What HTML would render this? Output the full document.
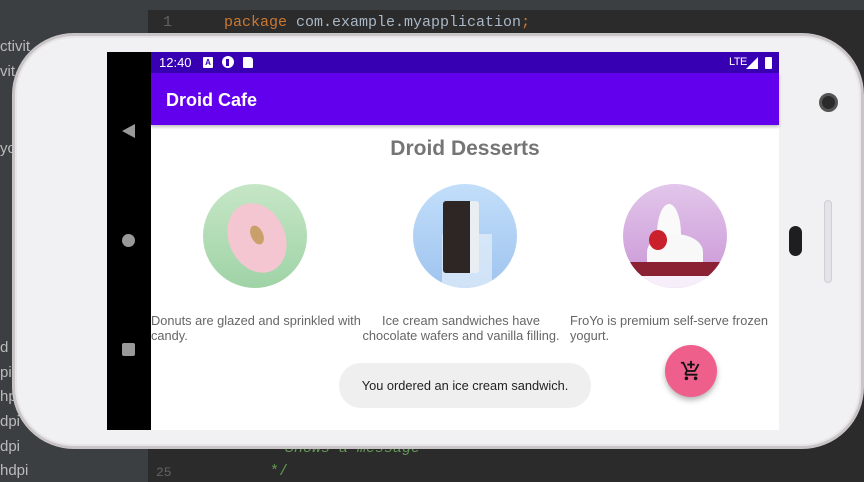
<!DOCTYPE html>
<html><head><meta charset="utf-8"><style>
*{margin:0;padding:0;box-sizing:border-box}
body{width:864px;height:482px;overflow:hidden;background:#2b2b2b;position:relative;font-family:"Liberation Sans",sans-serif}
.abs{position:absolute}
.code{font-family:"Liberation Mono",monospace;font-size:15px}
.side{color:#bbb;font-size:15px}
.desc{color:#666;font-size:12.8px;line-height:15px;white-space:nowrap}
</style></head><body>
<div class="abs" style="left:0;top:0;width:864px;height:10px;background:#3c3f41"></div>
<div class="abs" style="left:0;top:0;width:148px;height:482px;background:#3c3f41"></div>
<div class="abs code" style="left:163px;top:14px;color:#606366">1</div>
<div class="abs code" style="left:224px;top:14px;color:#a9b7c6"><span style="color:#cc7832">package</span> com.example.myapplication<span style="color:#cc7832">;</span></div>
<div class="abs side" style="left:0;top:38px">ctivit</div>
<div class="abs side" style="left:0;top:63px">vit</div>
<div class="abs side" style="left:0;top:140px">yc</div>
<div class="abs side" style="left:0;top:339px">d</div>
<div class="abs side" style="left:0;top:364px">pi</div>
<div class="abs side" style="left:0;top:388px">hpi</div>
<div class="abs side" style="left:0;top:413px">dpi</div>
<div class="abs side" style="left:0;top:438px">dpi</div>
<div class="abs side" style="left:0;top:462px">hdpi</div>
<div class="abs code" style="left:156px;top:465px;color:#606366;font-size:13px">25</div>
<div class="abs code" style="left:270px;top:463px;color:#629755">*/</div>
<div class="abs code" style="left:285px;top:440px;color:#629755;font-style:italic">Shows a message</div>
<!-- phone -->
<div class="abs" style="left:12px;top:33px;width:852px;height:416px;background:#f1f1f3;border-radius:62px;border:3px solid #c9c5c7;box-shadow:inset 0 0 0 2px #e8e6e8"></div>
<div class="abs" style="left:819px;top:93px;width:19px;height:19px;border-radius:50%;background:#2a2a2a;border:3px solid #555"></div>
<div class="abs" style="left:789px;top:226px;width:13px;height:30px;border-radius:7px;background:#1e1e1e"></div>
<div class="abs" style="left:824px;top:200px;width:8px;height:83px;border-radius:4px;background:#e4e4e8;border:1px solid #cfcfd4"></div>
<!-- screen -->
<div class="abs" style="left:107px;top:52px;width:44px;height:378px;background:#000"></div>
<div class="abs" style="left:122px;top:124px;width:0;height:0;border-top:7px solid transparent;border-bottom:7px solid transparent;border-right:13px solid #999"></div>
<div class="abs" style="left:122px;top:234px;width:13px;height:13px;border-radius:50%;background:#999"></div>
<div class="abs" style="left:122px;top:343px;width:13px;height:13px;border-radius:2px;background:#999"></div>
<div class="abs" style="left:151px;top:52px;width:628px;height:378px;background:#fff"></div>
<div class="abs" style="left:151px;top:52px;width:628px;height:21px;background:#3700b3"></div>
<div class="abs" style="left:159px;top:55px;color:#fff;font-size:13px">12:40</div>
<div class="abs" style="left:203px;top:57px;width:10px;height:11px;background:#fff;border-radius:1px;font-size:8px;color:#3700b3;text-align:center;font-weight:bold;line-height:11px">A</div>
<div class="abs" style="left:222px;top:56px;width:12px;height:12px;background:#fff;border-radius:50%"></div>
<div class="abs" style="left:226px;top:59px;width:3px;height:7px;background:#3700b3"></div>
<div class="abs" style="left:243px;top:57px;width:10px;height:11px;background:#fff;border-radius:1px 3px 1px 1px"></div>
<div class="abs" style="left:729px;top:56px;color:#fff;font-size:11px;letter-spacing:-0.5px">LTE</div>
<svg class="abs" style="left:746px;top:57px" width="12" height="12"><path d="M0 12L12 0V12Z" fill="#fff"/></svg>
<div class="abs" style="left:765px;top:57px;width:7px;height:12px;background:#fff;border-radius:1px"></div>
<div class="abs" style="left:151px;top:73px;width:628px;height:52px;background:#6200ee;box-shadow:0 2px 3px rgba(0,0,0,.25)"></div>
<div class="abs" style="left:166px;top:90px;color:#fff;font-size:18px;font-weight:bold">Droid Cafe</div>
<div class="abs" style="left:151px;top:137px;width:628px;text-align:center;color:#757575;font-size:21px;font-weight:bold">Droid Desserts</div>

<div class="abs" style="left:203px;top:184px;width:104px;height:104px;border-radius:50%;background:linear-gradient(#c6e6c6,#9fd3a6);overflow:hidden">
 <div class="abs" style="left:26px;top:18px;width:56px;height:72px;border-radius:50%;background:#f4c6d2;transform:rotate(-25deg)"></div>
 <div class="abs" style="left:48px;top:41px;width:12px;height:20px;border-radius:50%;background:#c9a06a;transform:rotate(-25deg)"></div>
</div>
<div class="abs" style="left:413px;top:184px;width:104px;height:104px;border-radius:50%;background:linear-gradient(#c2defa,#9fc4ef);overflow:hidden">
 <div class="abs" style="left:29px;top:50px;width:50px;height:54px;background:rgba(230,240,250,.7)"></div>
 <div class="abs" style="left:30px;top:17px;width:36px;height:72px;background:#2e2624;border-radius:3px;border-right:9px solid #e9eef3"></div>
</div>
<div class="abs" style="left:623px;top:184px;width:104px;height:104px;border-radius:50%;background:linear-gradient(#e2c6ea,#c995d6);overflow:hidden">
 <div class="abs" style="left:34px;top:20px;width:24px;height:60px;border-radius:50% 50% 8px 8px;background:#fafafa"></div>
 <div class="abs" style="left:24px;top:50px;width:56px;height:36px;border-radius:50% 50% 8px 8px;background:#f8f8f8"></div>
 <div class="abs" style="left:0;top:78px;width:104px;height:14px;background:#8a2233;border-radius:6px"></div>
 <div class="abs" style="left:26px;top:46px;width:18px;height:20px;border-radius:50%;background:#c9202c"></div>
 <div class="abs" style="left:0;top:92px;width:104px;height:12px;background:#f6eef8"></div>
</div>

<div class="abs desc" style="left:151px;top:313px">Donuts are glazed and sprinkled with<br>candy.</div>
<div class="abs desc" style="left:361px;top:313px;width:200px;text-align:center">Ice cream sandwiches have<br>chocolate wafers and vanilla filling.</div>
<div class="abs desc" style="left:570px;top:313px">FroYo is premium self-serve frozen<br>yogurt.</div>
<div class="abs" style="left:339px;top:363px;width:252px;height:45px;border-radius:22px;background:#efefef;color:#222;font-size:12.8px;text-align:center;line-height:45px">You ordered an ice cream sandwich.</div>
<div class="abs" style="left:665px;top:345px;width:52px;height:52px;border-radius:50%;background:#ee5f8c;box-shadow:0 3px 6px rgba(0,0,0,.3)"></div>
<svg class="abs" style="left:680px;top:360px" width="22" height="22" viewBox="0 0 24 24"><path d="M11 9h2V6h3V4h-3V1h-2v3H8v2h3v3zm-4 9c-1.1 0-2 .9-2 2s.9 2 2 2 2-.9 2-2-.9-2-2-2zm10 0c-1.1 0-2 .9-2 2s.9 2 2 2 2-.9 2-2-.9-2-2-2zm-9.830-3.25l.03-.12.9-1.63h7.45c.75 0 1.410-.41 1.75-1.03l3.86-7.01L19.42 4l-3.87 7H8.53L4.27 2H1v2h2l3.6 7.59-1.35 2.45C4.52 15.370 5.48 17 7 17h12v-2H7.42c-.13 0-.25-.11-.25-.25z" fill="#111"/></svg>
</body></html>
